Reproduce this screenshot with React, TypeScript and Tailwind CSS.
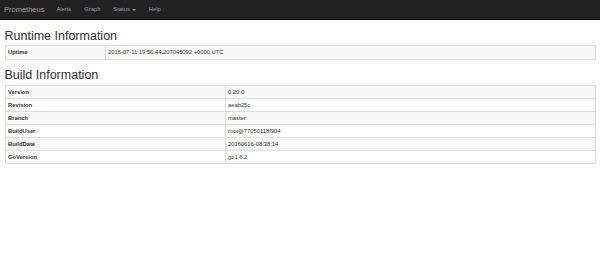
const runtime = [{ label: 'Uptime', value: '2016-07-11 19:56:44.207045092 +0000 UTC' }];

const build = [
  { label: 'Version', value: '0.20.0' },
  { label: 'Revision', value: 'aeab25c' },
  { label: 'Branch', value: 'master' },
  { label: 'BuildUser', value: 'root@77050118f904' },
  { label: 'BuildDate', value: '20160616-08:38:14' },
  { label: 'GoVersion', value: 'go1.6.2' },
];

function InfoTable({ rows, labelWidth, rowHeight }: { rows: { label: string; value: string }[]; labelWidth: string; rowHeight: string }) {
  return (
    <table className="w-full border-collapse border border-[#ddd] text-[5.8px] text-[#333]">
      <tbody>
        {rows.map((r, i) => (
          <tr key={r.label} className={i % 2 === 0 ? 'bg-[#f9f9f9]' : 'bg-white'}>
            <th className={`${labelWidth} ${rowHeight} border border-[#ddd] px-[2.5px] py-0 text-left font-bold`}>{r.label}</th>
            <td className={`${rowHeight} border border-[#ddd] px-[2.5px] py-0`}>{r.value}</td>
          </tr>
        ))}
      </tbody>
    </table>
  );
}

export default function App() {
  return (
    <div className="h-[261px] w-[600px] bg-white font-['Liberation_Sans',Arial,sans-serif]">
      <nav className="flex h-[20px] items-center border-b border-[#080808] bg-[#222] px-[4px] text-[#9d9d9d]">
        <span className="text-[7.5px]">Prometheus</span>
        <div className="ml-[12px] flex items-center gap-[13px] text-[5.8px]">
          <span>Alerts</span>
          <span>Graph</span>
          <span className="flex items-center gap-[2px]">
            Status
            <span className="inline-block h-0 w-0 border-x-[2px] border-t-[2px] border-x-transparent border-t-[#9d9d9d]" />
          </span>
          <span>Help</span>
        </div>
      </nav>
      <main className="px-[4.5px]">
        <h2 className="mt-[9px] mb-[2px] text-[12.5px] leading-[14px] text-[#333]">Runtime Information</h2>
        <InfoTable rows={runtime} labelWidth="w-[100px]" rowHeight="h-[14px]" />
        <h2 className="mt-[8px] mb-[3px] text-[12.5px] leading-[14px] text-[#333]">Build Information</h2>
        <InfoTable rows={build} labelWidth="w-[220px]" rowHeight="h-[13px]" />
      </main>
    </div>
  );
}
